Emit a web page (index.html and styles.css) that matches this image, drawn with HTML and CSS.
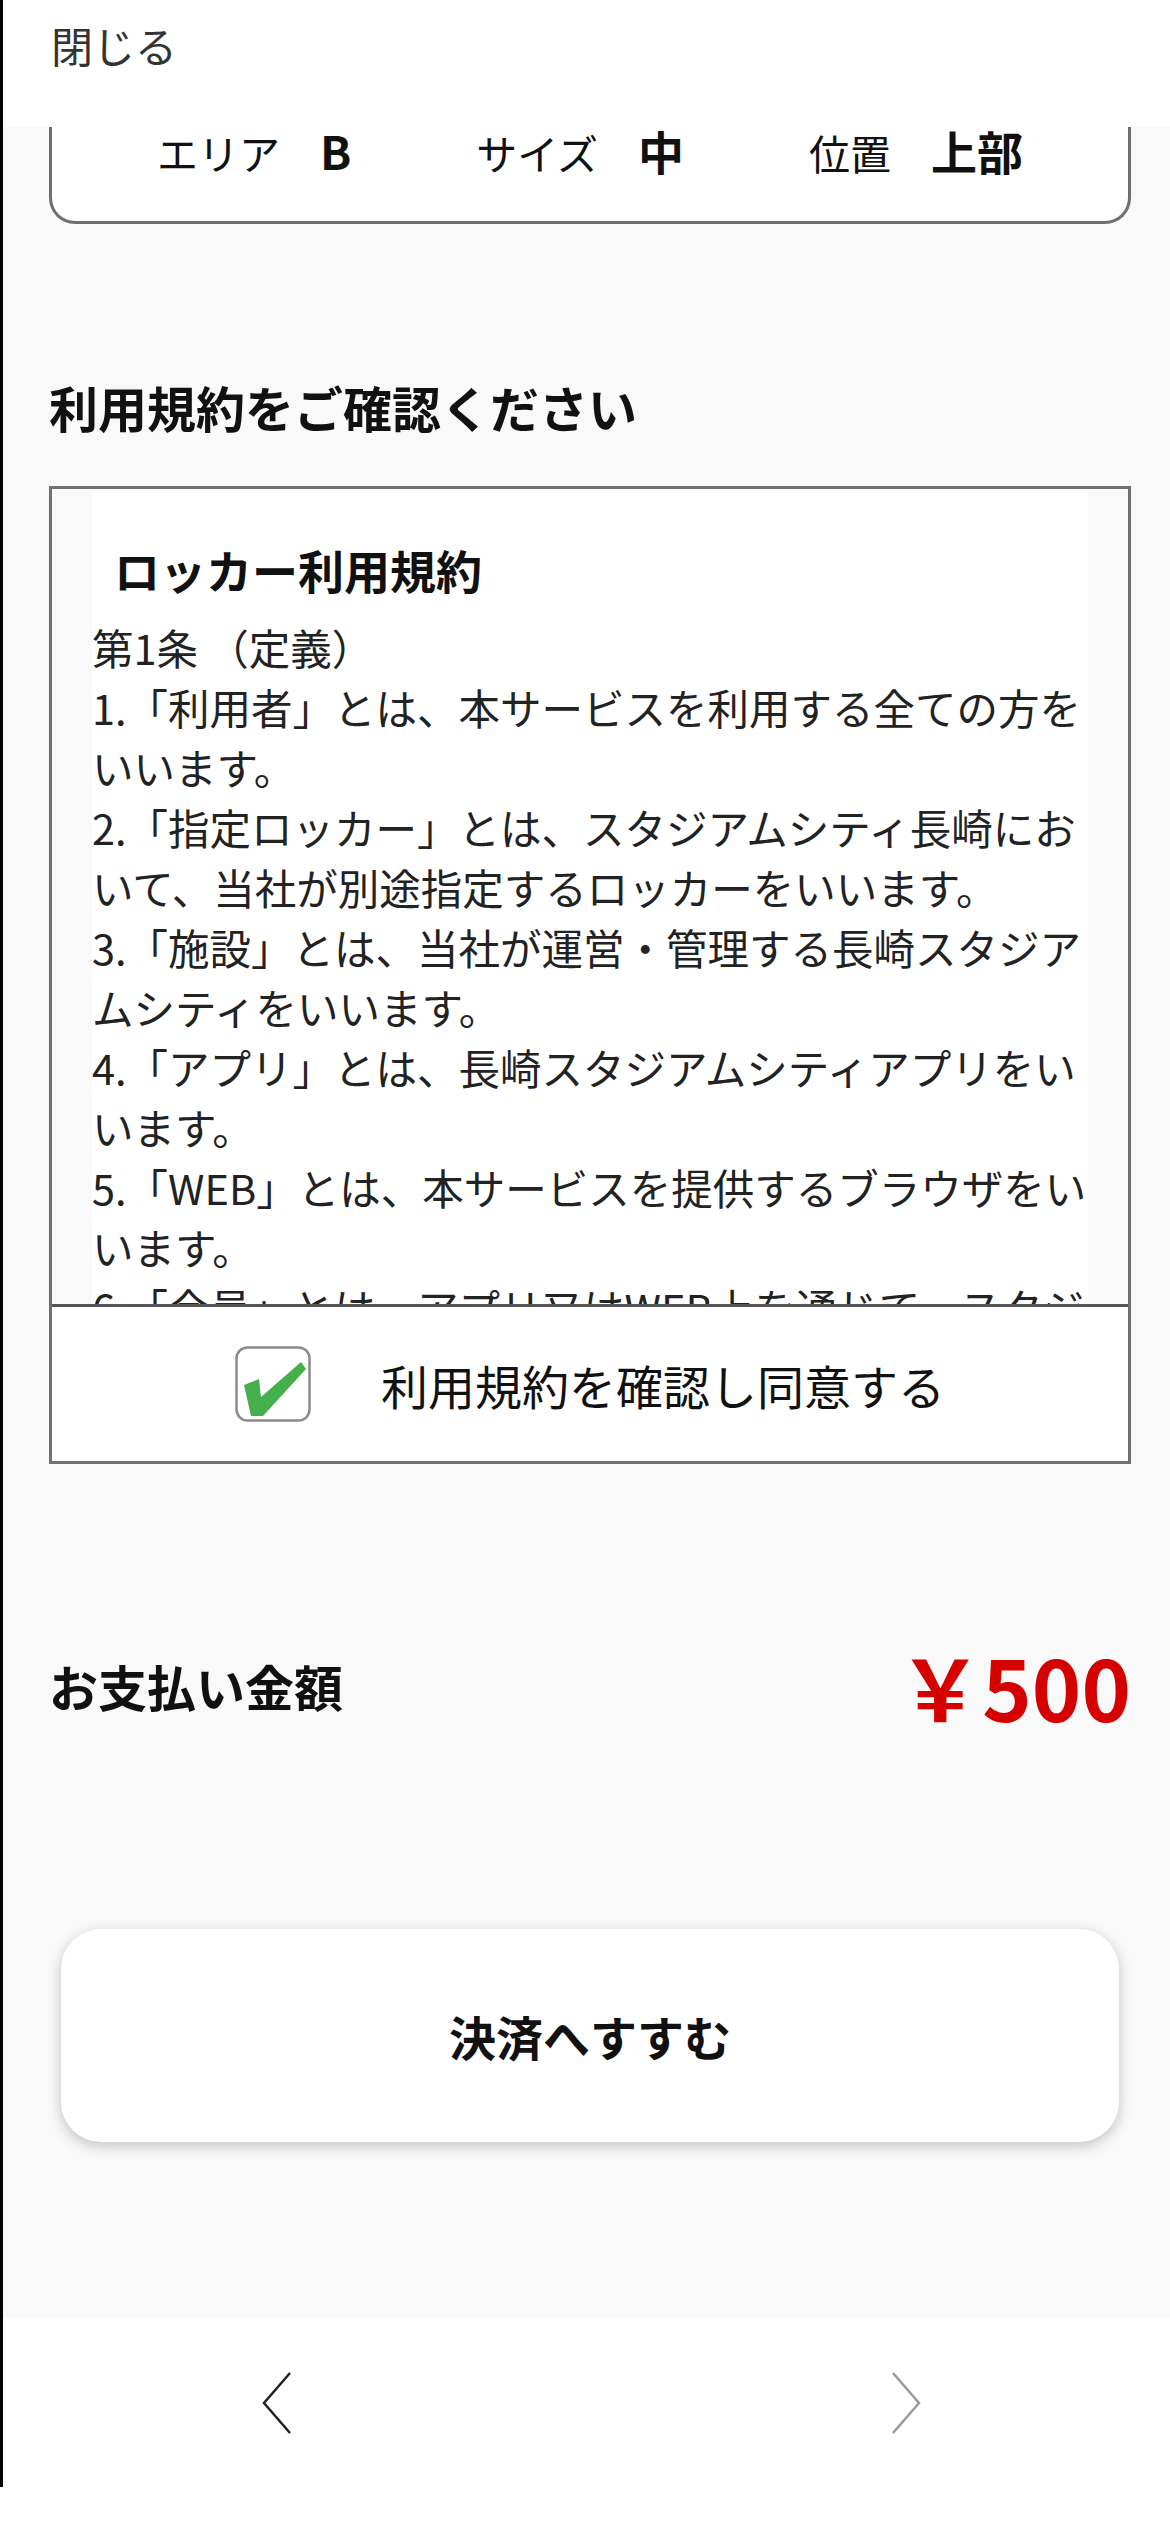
FILE: index.html
```html
<!DOCTYPE html>
<html lang="ja">
<head>
  <meta charset="UTF-8">
  <meta name="viewport" content="width=device-width, initial-scale=1.0">
  <title>ロッカー予約 確認</title>
  <link rel="stylesheet" href="styles.css">
</head>
<body>
  <div class="phone">
    <header class="topbar">
      <span class="close-link">閉じる</span>
    </header>

    <main class="content">
      <section class="spot-card">
        <div class="spot-row">
          <div class="spot-item">
            <span class="spot-label">エリア</span>
            <span class="spot-value">B</span>
          </div>
          <div class="spot-item">
            <span class="spot-label">サイズ</span>
            <span class="spot-value">中</span>
          </div>
          <div class="spot-item">
            <span class="spot-label">位置</span>
            <span class="spot-value">上部</span>
          </div>
        </div>
      </section>

      <h2 class="section-title">利用規約をご確認ください</h2>

      <div class="terms-box">
        <div class="terms-scroll">
          <div class="terms-doc">
            <h3 class="terms-heading">ロッカー利用規約</h3>
            <div class="terms-text">
              <div>第1条 （定義）</div>
              <div>1.「利用者」とは、本サービスを利用する全ての方をいいます。</div>
              <div>2.「指定ロッカー」とは、スタジアムシティ長崎において、当社が別途指定するロッカーをいいます。</div>
              <div>3.「施設」とは、当社が運営・管理する長崎スタジアムシティをいいます。</div>
              <div>4.「アプリ」とは、長崎スタジアムシティアプリをいいます。</div>
              <div>5.「WEB」とは、本サービスを提供するブラウザをいいます。</div>
              <div>6.「会員」とは、アプリ又はWEB上を通じて、スタジアムシティ長崎の会員登録を行った方をいいます。</div>
              <div>第2条 （適用）</div>
              <div>本規約は、指定ロッカーの利用に関する一切の関係に適用されます。</div>
            </div>
          </div>
        </div>
        <label class="agree-row">
          <svg class="check-box" width="76" height="76" viewBox="0 0 76 76">
            <rect x="1.5" y="1.5" width="73" height="73" rx="11" fill="#fff" stroke="#8a8a8a" stroke-width="2.5"/>
            <polygon points="9,39 24,33 26,51 66,16 71,23 28,70 16,70" fill="#45b04b"/>
          </svg>
          <span class="agree-text">利用規約を確認し同意する</span>
        </label>
      </div>

      <div class="pay-row">
        <span class="pay-label">お支払い金額</span>
        <span class="pay-price">￥500</span>
      </div>

      <button class="pay-button" type="button">決済へすすむ</button>
    </main>

    <nav class="bottom-nav">
      <svg width="30" height="64" viewBox="0 0 30 64">
        <polyline points="28,2 2,32 28,62" fill="none" stroke="#222" stroke-width="2.5"/>
      </svg>
      <svg width="30" height="64" viewBox="0 0 30 64">
        <polyline points="2,2 28,32 2,62" fill="none" stroke="#9a9a9a" stroke-width="2.5"/>
      </svg>
    </nav>
  </div>
</body>
</html>
```

FILE: styles.css
```css
body {
  margin: 0;
  background: #fff;
  font-family: "Noto Sans CJK JP", "Noto Sans", sans-serif;
  color: #111;
}

.phone {
  height: 2487px;
  border-left: 3px solid #000;
  display: flex;
  flex-direction: column;
}

.topbar {
  height: 127px;
  box-sizing: border-box;
  padding: 22px 0 0 48px;
  background: #fff;
}

.close-link {
  font-size: 42px;
  line-height: 46px;
  color: #333;
}

.content {
  flex: 1;
  background: #f9f9f9;
  padding: 0 39px 0 46px;
  display: flex;
  flex-direction: column;
}

.spot-card {
  background: #fff;
  border: 3px solid #6f6f6f;
  border-top: none;
  border-radius: 0 0 26px 26px;
  padding: 0 0 46px;
}

.spot-row {
  display: flex;
  justify-content: center;
  gap: 125px;
  line-height: 46px;
}

.spot-item {
  display: flex;
  align-items: baseline;
  gap: 40px;
}

.spot-label {
  font-size: 41px;
}

.spot-value {
  font-size: 46px;
  font-weight: bold;
}

.section-title {
  margin: 153px 0 49px;
  font-size: 49px;
  line-height: 60px;
  font-weight: bold;
}

.terms-box {
  border: 3px solid #707070;
  background: #fff;
}

.terms-scroll {
  height: 815px;
  box-sizing: border-box;
  padding: 3px 40px 0;
  background: #f9f9f9;
  overflow: hidden;
}

.terms-doc {
  background: #fff;
  padding-top: 47px;
  min-height: 100%;
}

.terms-heading {
  margin: 0 0 18px;
  padding-left: 22px;
  font-size: 46px;
  line-height: 60px;
  font-weight: bold;
}

.terms-text {
  font-size: 41.5px;
  line-height: 60px;
  color: #222;
}

.agree-row {
  height: 157px;
  box-sizing: border-box;
  border-top: 3px solid #555;
  display: flex;
  align-items: center;
  justify-content: center;
  gap: 70px;
}

.check-box {
  display: block;
}

.agree-text {
  font-size: 47px;
}

.pay-row {
  margin-top: 172px;
  height: 100px;
  display: flex;
  align-items: center;
  justify-content: space-between;
}

.pay-label {
  font-size: 49px;
  line-height: 60px;
  font-weight: bold;
}

.pay-price {
  font-size: 84px;
  line-height: 100px;
  font-weight: bold;
  color: #d50000;
}

.pay-button {
  margin: 193px 12px 0;
  height: 213px;
  border: none;
  border-radius: 40px;
  background: #fff;
  box-shadow: 0 4px 14px rgba(0, 0, 0, 0.22);
  font-family: inherit;
  font-size: 47px;
  font-weight: bold;
  color: #111;
}

.bottom-nav {
  height: 169px;
  background: #fff;
  display: flex;
  align-items: center;
  justify-content: space-between;
  padding: 0 249px 0 259px;
}
```
